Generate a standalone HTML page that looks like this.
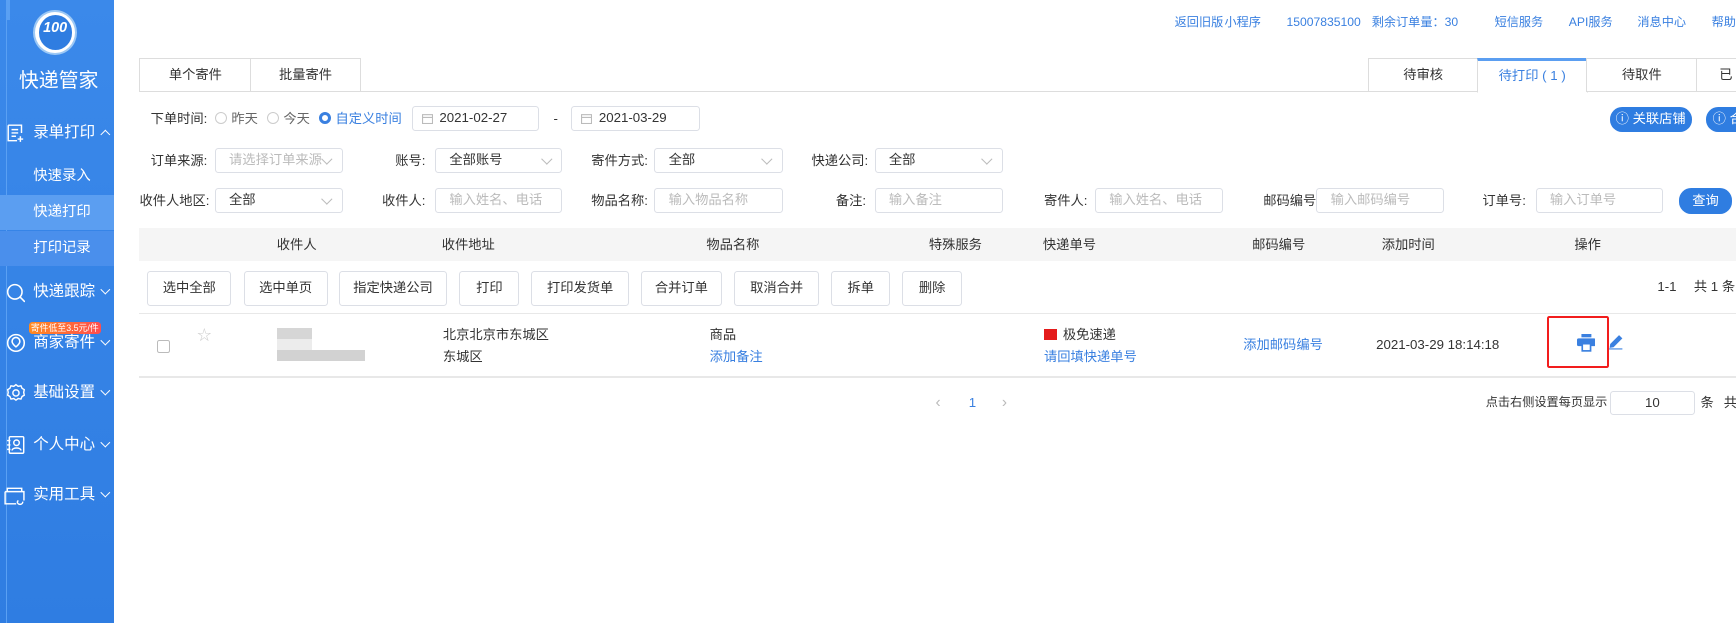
<!DOCTYPE html>
<html><head><meta charset="utf-8"><style>
*{margin:0;padding:0;box-sizing:border-box}
html,body{width:1736px;height:623px;overflow:hidden;background:#fff}
#w{zoom:1.1071;width:1568px;height:563px;position:relative;font-family:"Liberation Sans","Noto Sans CJK SC",sans-serif;font-size:12px;line-height:14px;color:#333}
.a{position:absolute;white-space:nowrap}
#sb{position:absolute;left:0;top:0;width:103px;height:563px;background:linear-gradient(#3b89ea,#2f7de2)}
#sb .a{color:#fff;line-height:18px}
.blue{color:#3a80e0}
.top{position:absolute;top:14px;font-size:11px;color:#3a80e0;white-space:nowrap}
.box{position:absolute;border:1px solid #dcdfe6;border-radius:3px;height:22px;background:#fff;line-height:20px;padding-left:12px;color:#333}
.ph{color:#bbb}
.sel:after{content:"";position:absolute;right:10px;top:5px;width:6px;height:6px;border-right:1px solid #bbb;border-bottom:1px solid #bbb;transform:rotate(45deg)}
.btn{position:absolute;top:245px;height:31px;border:1px solid #dcdfe6;border-radius:3px;text-align:center;line-height:29px;background:#fff}
.tab{position:absolute;top:52px;height:31px;border:1px solid #ddd;text-align:center;line-height:29px;background:#fff}
.pill{position:absolute;background:#2f7de1;color:#fff;border-radius:11px;height:22px;line-height:22px;text-align:center}
.lbl{position:absolute;white-space:nowrap}
.th{position:absolute;top:214px;white-space:nowrap;transform:translateX(-50%)}
.radio{display:inline-block;width:11px;height:11px;border:1px solid #ccc;border-radius:50%;vertical-align:-1px;margin-right:4px}
.chev{display:inline-block;width:6px;height:6px;border-right:1.2px solid #fff;border-bottom:1.2px solid #fff;transform:rotate(45deg);margin-left:6px;vertical-align:3px}
</style></head><body><div id="w">
<div id="sb">
 <div style="position:absolute;left:5px;top:0;width:1px;height:563px;background:#5aa0f3"></div>
 <div style="position:absolute;left:5px;top:0;width:4px;height:18px;background:#5aa0f3"></div>
 <div style="position:absolute;left:30px;top:9px;width:40px;height:41px;border-radius:50%;background:#fff;border:2px solid #9cc8f5"><div style="position:absolute;left:3px;top:3px;width:30px;height:31px;border-radius:50%;background:#2f7de1;color:#fff;font-weight:bold;font-style:italic;font-size:13px;text-align:center;line-height:24px">100</div></div>
 <div class="a" style="left:17px;top:62px;font-size:18px;line-height:22px">快递管家</div>
 <svg class="a" style="left:5px;top:111px" width="18" height="18" viewBox="0 0 18 18" fill="none" stroke="#fff" stroke-width="1.3"><path d="M2 2h12v7M2 2v14h8M5 6h6M5 9h6M5 12h4M13 12v5M10.5 14.5h5"/></svg>
 <div class="a" style="left:30px;top:111px;font-size:14px">录单打印 <span style="display:inline-block;width:6px;height:6px;border-left:1.2px solid #fff;border-top:1.2px solid #fff;transform:rotate(45deg);vertical-align:-1px;margin-left:2px"></span></div>
 <div class="a" style="left:30px;top:151px;font-size:13px">快速录入</div>
 <div style="position:absolute;left:0;top:176px;width:103px;height:32px;background:#5b9ef1"></div>
 <div class="a" style="left:30px;top:183px;font-size:13px">快递打印</div>
 <div style="position:absolute;left:0;top:209px;width:103px;height:31px;background:#4a8fec"></div>
 <div class="a" style="left:30px;top:216px;font-size:13px">打印记录</div>
 <svg class="a" style="left:5px;top:256px" width="18" height="18" viewBox="0 0 18 18" fill="none" stroke="#fff" stroke-width="1.4"><circle cx="8" cy="8" r="6.5"/><path d="M12.5 12.5l4.5 4.5"/></svg>
 <div class="a" style="left:30px;top:255px;font-size:14px">快递跟踪<span class="chev"></span></div>
 <div class="a" style="left:26px;top:291px;width:65px;height:11px;border-radius:3px;background:linear-gradient(90deg,#ff8a1f,#ff4d4f);font-size:8px;line-height:11px;text-align:center">寄件低至3.5元/件</div>
 <svg class="a" style="left:5px;top:301px" width="18" height="18" viewBox="0 0 18 18" fill="none" stroke="#fff" stroke-width="1.4"><circle cx="9" cy="9" r="7.5"/><path d="M5.5 7.5a3.5 3.5 0 017 0c0 2.5-3.5 5-3.5 5s-3.5-2.5-3.5-5z"/></svg>
 <div class="a" style="left:30px;top:301px;font-size:14px">商家寄件<span class="chev"></span></div>
 <svg class="a" style="left:5px;top:346px" width="18" height="18" viewBox="0 0 18 18" fill="none" stroke="#fff" stroke-width="1.3"><path d="M9 1.5l2 1.5 2.5-.5 1 2.3 2 1.2-.5 2.5.5 2.5-2 1.2-1 2.3-2.5-.5-2 1.5-2-1.5-2.5.5-1-2.3-2-1.2.5-2.5-.5-2.5 2-1.2 1-2.3 2.5.5z"/><circle cx="9" cy="9" r="2.8"/></svg>
 <div class="a" style="left:30px;top:346px;font-size:14px">基础设置<span class="chev"></span></div>
 <svg class="a" style="left:5px;top:393px" width="18" height="18" viewBox="0 0 18 18" fill="none" stroke="#fff" stroke-width="1.3"><rect x="3" y="1.5" width="13" height="15" rx="1"/><circle cx="9.5" cy="7" r="2.5"/><path d="M5.5 14c0-3 8-3 8 0M1 5h3M1 9h3M1 13h3"/></svg>
 <div class="a" style="left:30px;top:393px;font-size:14px">个人中心<span class="chev"></span></div>
 <svg class="a" style="left:4px;top:438px" width="19" height="19" viewBox="0 0 19 19" fill="none" stroke="#fff" stroke-width="1.3"><path d="M3 6V3h13v3M1 6h17v8M1 6v11h10M12 15a2.5 2.5 0 105 0M12 15l1-1"/></svg>
 <div class="a" style="left:30px;top:438px;font-size:14px">实用工具<span class="chev"></span></div>
</div>

<div class="top" style="left:1061px">返回旧版</div>
<div class="top" style="left:1106px">小程序</div>
<div class="top" style="left:1162px">15007835100</div>
<div class="top" style="left:1239px">剩余订单量：30</div>
<div class="top" style="left:1350px">短信服务</div>
<div class="top" style="left:1417px">API服务</div>
<div class="top" style="left:1479px">消息中心</div>
<div class="top" style="left:1546px">帮助</div>

<div style="position:absolute;left:126px;top:82px;width:1442px;height:1px;background:#ddd"></div>
<div class="tab" style="left:126px;width:101px">单个寄件</div>
<div class="tab" style="left:226px;width:100px">批量寄件</div>
<div class="tab" style="left:1236px;width:99px">待审核</div>
<div class="tab" style="left:1334px;width:100px;color:#3a80e0;border-top:3px solid #5b9ef1;border-bottom-color:#fff;line-height:27px;height:32px">待打印 ( 1 )</div>
<div class="tab" style="left:1433px;width:100px">待取件</div>
<div class="tab" style="left:1532px;width:60px;padding-left:20px;text-align:left">已</div>

<div class="lbl" style="left:136px;top:100px">下单时间:</div>
<div class="lbl" style="left:194px;top:100px;color:#666"><span class="radio"></span>昨天</div>
<div class="lbl" style="left:241px;top:100px;color:#666"><span class="radio"></span>今天</div>
<div class="lbl blue" style="left:288px;top:100px"><span class="radio" style="border:3px solid #3a80e0"></span>自定义时间</div>
<div class="box" style="left:372px;top:96px;width:115px;padding-left:24px">2021-02-27</div>
<div class="lbl" style="left:500px;top:100px">-</div>
<div class="box" style="left:516px;top:96px;width:116px;padding-left:24px">2021-03-29</div>
<svg class="a" style="left:381px;top:102px" width="10" height="10" fill="none" stroke="#bbb"><rect x=".5" y="1.5" width="9" height="8"/><path d="M.5 4h9"/></svg>
<svg class="a" style="left:525px;top:102px" width="10" height="10" fill="none" stroke="#bbb"><rect x=".5" y="1.5" width="9" height="8"/><path d="M.5 4h9"/></svg>
<div class="pill" style="left:1454px;top:97px;width:74px">ⓘ 关联店铺</div>
<div class="pill" style="left:1541px;top:97px;width:60px;text-align:left;padding-left:6px">ⓘ 合</div>

<div class="lbl" style="left:136px;top:138px">订单来源:</div>
<div class="box sel ph" style="left:194px;top:134px;width:116px">请选择订单来源</div>
<div class="lbl" style="left:357px;top:138px">账号:</div>
<div class="box sel" style="left:393px;top:134px;width:115px">全部账号</div>
<div class="lbl" style="left:534px;top:138px">寄件方式:</div>
<div class="box sel" style="left:591px;top:134px;width:116px">全部</div>
<div class="lbl" style="left:733px;top:138px">快递公司:</div>
<div class="box sel" style="left:790px;top:134px;width:116px">全部</div>

<div class="lbl" style="left:126px;top:174px">收件人地区:</div>
<div class="box sel" style="left:194px;top:170px;width:116px">全部</div>
<div class="lbl" style="left:345px;top:174px">收件人:</div>
<div class="box ph" style="left:393px;top:170px;width:115px">输入姓名、电话</div>
<div class="lbl" style="left:534px;top:174px">物品名称:</div>
<div class="box ph" style="left:591px;top:170px;width:116px">输入物品名称</div>
<div class="lbl" style="left:755px;top:174px">备注:</div>
<div class="box ph" style="left:790px;top:170px;width:116px">输入备注</div>
<div class="lbl" style="left:943px;top:174px">寄件人:</div>
<div class="box ph" style="left:989px;top:170px;width:116px">输入姓名、电话</div>
<div class="lbl" style="left:1141px;top:174px">邮码编号:</div>
<div class="box ph" style="left:1189px;top:170px;width:115px">输入邮码编号</div>
<div class="lbl" style="left:1339px;top:174px">订单号:</div>
<div class="box ph" style="left:1387px;top:170px;width:115px">输入订单号</div>
<div class="pill" style="left:1517px;top:170px;width:47px;height:23px;line-height:23px">查询</div>

<div style="position:absolute;left:126px;top:206px;width:1442px;height:30px;background:#f5f5f5"></div>
<div class="th" style="left:268px">收件人</div>
<div class="th" style="left:423px">收件地址</div>
<div class="th" style="left:662px">物品名称</div>
<div class="th" style="left:863px">特殊服务</div>
<div class="th" style="left:966px">快递单号</div>
<div class="th" style="left:1155px">邮码编号</div>
<div class="th" style="left:1272px">添加时间</div>
<div class="th" style="left:1434px">操作</div>

<div class="btn" style="left:133px;width:76px">选中全部</div>
<div class="btn" style="left:220px;width:76px">选中单页</div>
<div class="btn" style="left:306px;width:98px">指定快递公司</div>
<div class="btn" style="left:415px;width:54px">打印</div>
<div class="btn" style="left:480px;width:88px">打印发货单</div>
<div class="btn" style="left:579px;width:73px">合并订单</div>
<div class="btn" style="left:663px;width:77px">取消合并</div>
<div class="btn" style="left:751px;width:53px">拆单</div>
<div class="btn" style="left:815px;width:54px">删除</div>
<div class="lbl" style="left:1497px;top:252px">1-1</div>
<div class="lbl" style="left:1530px;top:252px">共 1 条</div>

<div style="position:absolute;left:126px;top:283px;width:1442px;height:1px;background:#e8e8e8"></div>
<div style="position:absolute;left:126px;top:340px;width:1442px;height:1px;background:#e8e8e8"></div>
<div style="position:absolute;left:142px;top:307px;width:12px;height:12px;border:1px solid #bbb;border-radius:2px"></div>
<div class="lbl" style="left:178px;top:297px;color:#ccc;font-size:13px">☆</div>
<div style="position:absolute;left:250px;top:296px;width:32px;height:10px;background:#d6d6d6"></div>
<div style="position:absolute;left:250px;top:306px;width:32px;height:10px;background:#ececec"></div>
<div style="position:absolute;left:250px;top:316px;width:80px;height:10px;background:#d2d2d2"></div>
<div class="lbl" style="left:400px;top:295px">北京北京市东城区</div>
<div class="lbl" style="left:400px;top:315px">东城区</div>
<div class="lbl" style="left:641px;top:295px">商品</div>
<div class="lbl blue" style="left:641px;top:315px">添加备注</div>
<div style="position:absolute;left:943px;top:297px;width:12px;height:10px;background:#e41b1b"></div>
<div class="lbl" style="left:960px;top:295px">极免速递</div>
<div class="lbl blue" style="left:943px;top:315px">请回填快递单号</div>
<div class="lbl blue" style="left:1123px;top:304px">添加邮码编号</div>
<div class="lbl" style="left:1243px;top:304px">2021-03-29 18:14:18</div>
<div style="position:absolute;left:1397px;top:285px;width:56px;height:47px;border:2px solid #f21d1d;border-radius:2px"></div>
<svg class="a" style="left:1424px;top:302px" width="17" height="16" viewBox="0 0 17 16"><rect x="4" y="0" width="9" height="3" fill="#3a80e0"/><rect x="0" y="4" width="17" height="7" rx="1.5" fill="#3a80e0"/><rect x="4" y="8" width="9" height="8" fill="#3a80e0"/><rect x="5.5" y="9.5" width="6" height="5" fill="#fff"/></svg>
<svg class="a" style="left:1452px;top:302px" width="14" height="14" viewBox="0 0 14 14" fill="#3a80e0"><path d="M10 1l3 3-8 8-3.5.5.5-3.5z"/><rect x="1" y="13" width="12" height="1"/></svg>

<div class="lbl" style="left:845px;top:357px;color:#bbb;font-size:14px">‹</div>
<div class="lbl blue" style="left:875px;top:357px">1</div>
<div class="lbl" style="left:905px;top:357px;color:#bbb;font-size:14px">›</div>
<div class="lbl" style="left:1342px;top:357px;font-size:11px">点击右侧设置每页显示</div>
<div class="box" style="left:1454px;top:353px;width:77px;text-align:center;padding:0">10</div>
<div class="lbl" style="left:1536px;top:357px">条</div>
<div class="lbl" style="left:1557px;top:357px">共</div>
</div></body></html>
